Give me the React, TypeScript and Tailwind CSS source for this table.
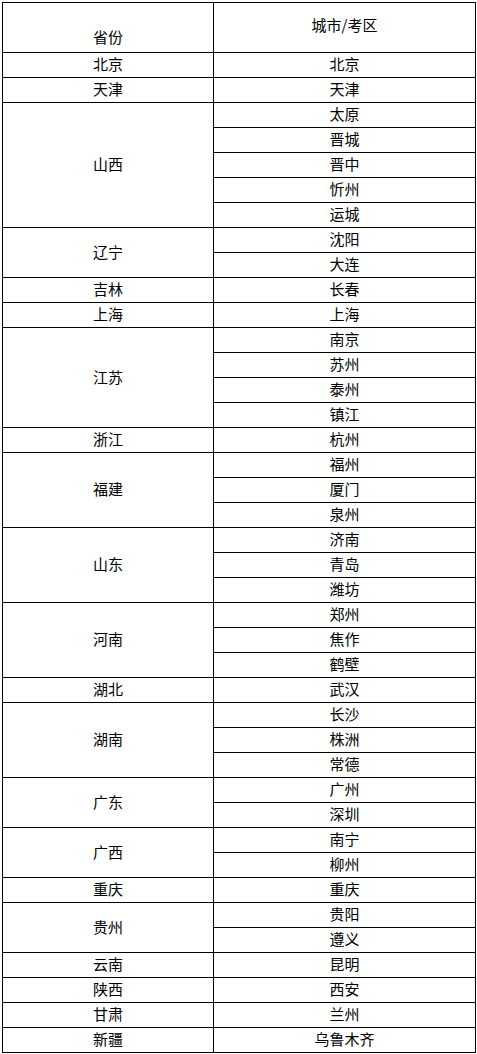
import React from 'react';

const data: { province: string; cities: string[] }[] = [
  { province: '北京', cities: ['北京'] },
  { province: '天津', cities: ['天津'] },
  { province: '山西', cities: ['太原', '晋城', '晋中', '忻州', '运城'] },
  { province: '辽宁', cities: ['沈阳', '大连'] },
  { province: '吉林', cities: ['长春'] },
  { province: '上海', cities: ['上海'] },
  { province: '江苏', cities: ['南京', '苏州', '泰州', '镇江'] },
  { province: '浙江', cities: ['杭州'] },
  { province: '福建', cities: ['福州', '厦门', '泉州'] },
  { province: '山东', cities: ['济南', '青岛', '潍坊'] },
  { province: '河南', cities: ['郑州', '焦作', '鹤壁'] },
  { province: '湖北', cities: ['武汉'] },
  { province: '湖南', cities: ['长沙', '株洲', '常德'] },
  { province: '广东', cities: ['广州', '深圳'] },
  { province: '广西', cities: ['南宁', '柳州'] },
  { province: '重庆', cities: ['重庆'] },
  { province: '贵州', cities: ['贵阳', '遵义'] },
  { province: '云南', cities: ['昆明'] },
  { province: '陕西', cities: ['西安'] },
  { province: '甘肃', cities: ['兰州'] },
  { province: '新疆', cities: ['乌鲁木齐'] },
];

const cell = 'border border-black p-0 text-center align-middle leading-none';

const App = () => {
  return (
    <div className="bg-white min-h-screen pt-[2px] pl-[2px]">
      <table
        className="border-collapse table-fixed w-[474px] text-[15px] text-black"
        style={{ fontFamily: '"Noto Sans CJK SC", "Noto Sans", sans-serif' }}
      >
        <colgroup>
          <col className="w-[211px]" />
          <col />
        </colgroup>
        <thead>
          <tr className="h-[50px]">
            <th className={`${cell} font-normal !align-bottom pb-[8px]`}>省份</th>
            <th className={`${cell} font-normal pb-[6px]`}>城市/考区</th>
          </tr>
        </thead>
        <tbody>
          {data.map((group) =>
            group.cities.map((city, i) => (
              <tr key={group.province + city} className="h-[25px]">
                {i === 0 && (
                  <td className={`${cell} pb-[3px]`} rowSpan={group.cities.length}>
                    {group.province}
                  </td>
                )}
                <td className={`${cell} pb-[3px]`}>{city}</td>
              </tr>
            ))
          )}
        </tbody>
      </table>
    </div>
  );
};

export default App;
